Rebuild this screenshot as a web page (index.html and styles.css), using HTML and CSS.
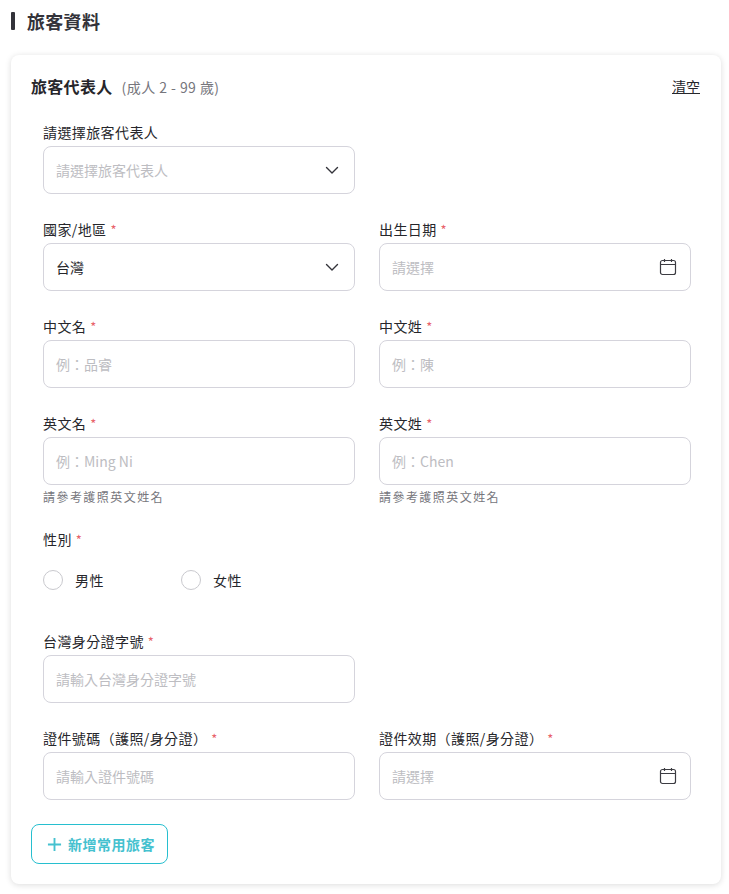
FILE: index.html
```html
<!DOCTYPE html>
<html lang="zh-Hant">
<head>
  <meta charset="UTF-8" />
  <meta name="viewport" content="width=device-width, initial-scale=1.0"/>
  <title>旅客資料</title>
  <link rel="stylesheet" href="styles.css">
</head>
<body>

<svg width="0" height="0" class="icon-defs">
  <symbol id="icon-chevron" viewBox="0 0 16 16">
    <path d="M2.5 5.5 8 11l5.5-5.5" fill="none" stroke="currentColor" stroke-width="1.4" stroke-linecap="round" stroke-linejoin="round"/>
  </symbol>
  <symbol id="icon-calendar" viewBox="0 0 18 18">
    <rect x="1.5" y="2.5" width="15" height="14" rx="2" fill="none" stroke="currentColor" stroke-width="1.2"/>
    <path d="M1.5 6.5h15M5.5 1v3M12.5 1v3" fill="none" stroke="currentColor" stroke-width="1.2"/>
  </symbol>
</svg>

<h2 class="section-title">旅客資料</h2>

<div class="card">
  <div class="card-header">
    <div class="card-title">旅客代表人<span class="card-sub">(成人 2 - 99 歲)</span></div>
    <a class="clear-link" href="#">清空</a>
  </div>

  <div class="form-grid">
    <div class="field">
      <label class="field-label">請選擇旅客代表人</label>
      <div class="input-box">
        <span class="placeholder">請選擇旅客代表人</span>
        <svg class="icon-chevron"><use href="#icon-chevron"/></svg>
      </div>
    </div>
    <div class="field"></div>

    <div class="field">
      <label class="field-label">國家/地區<span class="req">*</span></label>
      <div class="input-box">
        <span class="value">台灣</span>
        <svg class="icon-chevron"><use href="#icon-chevron"/></svg>
      </div>
    </div>
    <div class="field">
      <label class="field-label">出生日期<span class="req">*</span></label>
      <div class="input-box">
        <span class="placeholder">請選擇</span>
        <svg class="icon-calendar"><use href="#icon-calendar"/></svg>
      </div>
    </div>

    <div class="field">
      <label class="field-label">中文名<span class="req">*</span></label>
      <div class="input-box"><span class="placeholder">例：品睿</span></div>
    </div>
    <div class="field">
      <label class="field-label">中文姓<span class="req">*</span></label>
      <div class="input-box"><span class="placeholder">例：陳</span></div>
    </div>

    <div class="field has-hint">
      <label class="field-label">英文名<span class="req">*</span></label>
      <div class="input-box"><span class="placeholder">例：Ming Ni</span></div>
      <div class="hint">請參考護照英文姓名</div>
    </div>
    <div class="field has-hint">
      <label class="field-label">英文姓<span class="req">*</span></label>
      <div class="input-box"><span class="placeholder">例：Chen</span></div>
      <div class="hint">請參考護照英文姓名</div>
    </div>

    <div class="field gender-field">
      <label class="field-label">性別<span class="req">*</span></label>
      <div class="radio-row">
        <label class="radio"><span class="radio-dot"></span>男性</label>
        <label class="radio"><span class="radio-dot"></span>女性</label>
      </div>
    </div>
    <div class="field"></div>

    <div class="field">
      <label class="field-label">台灣身分證字號<span class="req">*</span></label>
      <div class="input-box"><span class="placeholder">請輸入台灣身分證字號</span></div>
    </div>
    <div class="field"></div>

    <div class="field">
      <label class="field-label">證件號碼（護照/身分證）<span class="req">*</span></label>
      <div class="input-box"><span class="placeholder">請輸入證件號碼</span></div>
    </div>
    <div class="field">
      <label class="field-label">證件效期（護照/身分證）<span class="req">*</span></label>
      <div class="input-box">
        <span class="placeholder">請選擇</span>
        <svg class="icon-calendar"><use href="#icon-calendar"/></svg>
      </div>
    </div>
  </div>

  <button class="add-btn" type="button">
    <svg class="icon-plus" viewBox="0 0 16 16"><path d="M8 1v14M1 8h14" fill="none" stroke="currentColor" stroke-width="2"/></svg>
    新增常用旅客
  </button>
</div>

</body>
</html>
```

FILE: styles.css
```css
body {
  margin: 0;
  padding: 0 8px 10px 11px;
  font-family: "Noto Sans CJK TC", "Noto Sans", sans-serif;
  background-color: #fff;
  color: #26262b;
}

.icon-defs {
  position: absolute;
}

.section-title {
  margin: 0;
  height: 55px;
  padding-left: 16px;
  font-size: 18px;
  line-height: 43px;
  font-weight: 700;
  letter-spacing: 0.3px;
  color: #33333a;
  position: relative;
}

.section-title::before {
  content: "";
  position: absolute;
  left: 0;
  top: 12px;
  width: 4px;
  height: 18px;
  border-radius: 1px;
  background-color: #33333a;
}

.card {
  background: #fff;
  border-radius: 8px;
  box-shadow: 0 1px 6px rgba(0, 0, 0, 0.14);
  padding: 20px;
  height: 829px;
  box-sizing: border-box;
}

.card-header {
  display: flex;
  justify-content: space-between;
  align-items: center;
  height: 22px;
  margin-bottom: 24px;
  padding-right: 1px;
}

.card-title {
  font-size: 16px;
  font-weight: 700;
  letter-spacing: 0.3px;
  color: #26262b;
}

.card-sub {
  margin-left: 9px;
  font-size: 14px;
  font-weight: 400;
  letter-spacing: 0.45px;
  color: #76767c;
}

.clear-link {
  font-size: 14px;
  color: #26262b;
  text-decoration: underline;
}

.form-grid {
  display: grid;
  grid-template-columns: 312px 312px;
  column-gap: 24px;
  padding-left: 12px;
}

.field {
  height: 97px;
}

.has-hint {
  height: 116px;
}

.gender-field {
  height: 102px;
}

.field-label {
  display: block;
  height: 25px;
  font-size: 14px;
  line-height: 23px;
  letter-spacing: 0.4px;
  color: #26262b;
}

.req {
  margin-left: 4px;
  font-size: 13px;
  color: #e8636a;
}

.input-box {
  display: flex;
  justify-content: space-between;
  align-items: center;
  box-sizing: border-box;
  height: 48px;
  padding: 0 12px;
  border: 1px solid #d5d4dc;
  border-radius: 8px;
  font-size: 14px;
}

.placeholder {
  color: #bdbdc2;
}

.value {
  color: #26262b;
}

.icon-chevron {
  width: 16px;
  height: 16px;
  margin-right: 2px;
  color: #33333a;
}

.icon-calendar {
  width: 18px;
  height: 18px;
  margin-right: 1px;
  color: #3c3c42;
}

.hint {
  margin-top: 3px;
  font-size: 12px;
  line-height: 18px;
  letter-spacing: 1.45px;
  color: #76767c;
}

.radio-row {
  display: flex;
  margin-top: 17px;
}

.radio {
  display: flex;
  align-items: center;
  width: 138px;
  font-size: 14px;
  letter-spacing: 0.4px;
  color: #26262b;
}

.radio-dot {
  box-sizing: border-box;
  width: 20px;
  height: 20px;
  margin-right: 12px;
  border: 1px solid #c9c9ce;
  border-radius: 50%;
}

.add-btn {
  display: flex;
  align-items: center;
  height: 40px;
  padding: 0 12px 0 15px;
  background: #fff;
  border: 1px solid #27bfcf;
  border-radius: 8px;
  font-family: inherit;
  font-size: 14px;
  font-weight: 700;
  letter-spacing: 0.5px;
  color: #45c1cf;
  cursor: pointer;
}

.icon-plus {
  width: 15px;
  height: 15px;
  margin-right: 6px;
}
```
